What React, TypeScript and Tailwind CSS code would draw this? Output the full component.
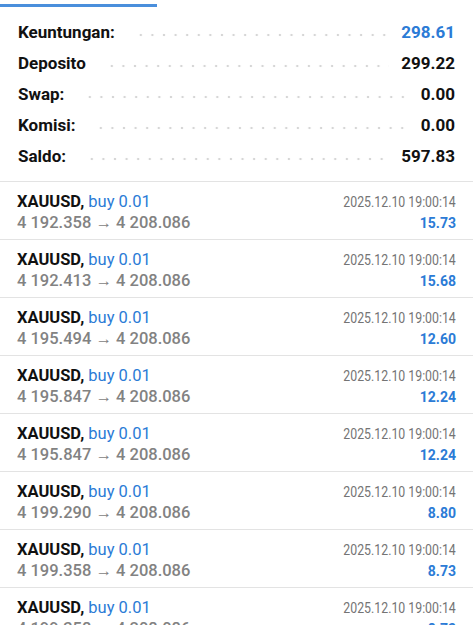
const summary = [
  { label: 'Keuntungan:', value: '298.61', blue: true },
  { label: 'Deposito', value: '299.22' },
  { label: 'Swap:', value: '0.00' },
  { label: 'Komisi:', value: '0.00' },
  { label: 'Saldo:', value: '597.83' },
];

const trades = [
  { open: '4 192.358', profit: '15.73' },
  { open: '4 192.413', profit: '15.68' },
  { open: '4 195.494', profit: '12.60' },
  { open: '4 195.847', profit: '12.24' },
  { open: '4 195.847', profit: '12.24' },
  { open: '4 199.290', profit: '8.80' },
  { open: '4 199.358', profit: '8.73' },
  { open: '4 199.358', profit: '8.73' },
];

function SummaryRow({ label, value, blue }: { label: string; value: string; blue?: boolean }) {
  return (
    <div className="flex h-[31px] items-center">
      <span className="text-[17px] font-bold text-[#111]">{label}</span>
      <div className="ml-[20px] mr-3 h-[6px] flex-1 translate-y-[2px] bg-[radial-gradient(circle,#d6d6d6_1px,transparent_1.6px)] bg-[length:11.6px_6px] bg-space-x" />
      <span className={`text-[17px] font-bold ${blue ? 'text-[#2b7bd6]' : 'text-[#111]'}`}>{value}</span>
    </div>
  );
}

function TradeRow({ open, profit }: { open: string; profit: string }) {
  return (
    <div className="flex justify-between border-t border-[#e3e3e3] pl-[17px] pr-[17px] pt-[9px] pb-[6px]">
      <div className="flex flex-col">
        <div className="h-[21px] text-[16.5px] leading-[21px]">
          <span className="font-bold text-[#111]">XAUUSD,</span>{' '}
          <span className="text-[#2b7bd6]">buy 0.01</span>
        </div>
        <div className="h-[21px] text-[16.5px] font-medium leading-[21px] text-[#828282]">
          {open} → 4 208.086
        </div>
      </div>
      <div className="flex flex-col items-end">
        <div className="h-[21px] leading-[21px]">
          <span className="inline-block origin-right scale-x-[0.88] text-[14px] text-[#747474]">2025.12.10 19:00:14</span>
        </div>
        <div className="h-[21px] text-[14px] font-bold leading-[23px] text-[#2b7bd6]">{profit}</div>
      </div>
    </div>
  );
}

export default function App() {
  return (
    <div className="h-[625px] w-[473px] overflow-hidden bg-white font-['Roboto',sans-serif]">
      <div className="mt-1 h-[3px] w-[157px] bg-[#4a8fdc]" />
      <div className="pl-[18px] pr-[18px] pt-[10px] pb-[9px]">
        {summary.map((s) => (
          <SummaryRow key={s.label} {...s} />
        ))}
      </div>
      {trades.map((t, i) => (
        <TradeRow key={i} {...t} />
      ))}
    </div>
  );
}
